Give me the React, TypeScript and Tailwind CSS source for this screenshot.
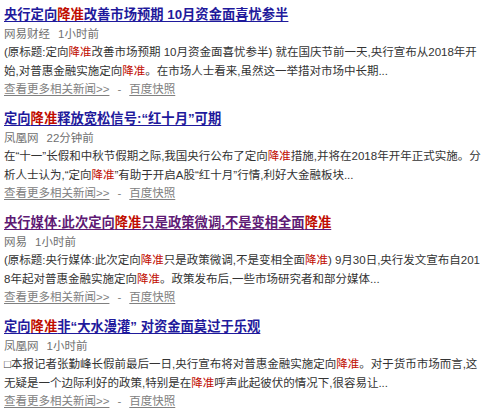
import type { ReactNode } from "react";

type Part = string | { hl: string };

interface NewsItem {
  title: Part[];
  visited?: boolean;
  source: string;
  time: string;
  lines: Part[][];
}

const HL = { hl: "降准" };

const ITEMS: NewsItem[] = [
  {
    title: ["央行定向", HL, "改善市场预期 10月资金面喜忧参半"],
    source: "网易财经",
    time: "1小时前",
    lines: [
      ["(原标题:定向", HL, "改善市场预期 10月资金面喜忧参半) 就在国庆节前一天,央行宣布从2018年开"],
      ["始,对普惠金融实施定向", HL, "。在市场人士看来,虽然这一举措对市场中长期..."],
    ],
  },
  {
    title: ["定向", HL, "释放宽松信号:“红十月”可期"],
    source: "凤凰网",
    time: "22分钟前",
    lines: [
      ["在“十一”长假和中秋节假期之际,我国央行公布了定向", HL, "措施,并将在2018年开年正式实施。分"],
      ["析人士认为,“定向", HL, "”有助于开启A股“红十月”行情,利好大金融板块..."],
    ],
  },
  {
    title: ["央行媒体:此次定向", HL, "只是政策微调,不是变相全面", HL],
    visited: true,
    source: "网易",
    time: "1小时前",
    lines: [
      ["(原标题:央行媒体:此次定向", HL, "只是政策微调,不是变相全面", HL, ") 9月30日,央行发文宣布自201"],
      ["8年起对普惠金融实施定向", HL, "。政策发布后,一些市场研究者和部分媒体..."],
    ],
  },
  {
    title: ["定向", HL, "非“大水漫灌” 对资金面莫过于乐观"],
    source: "凤凰网",
    time: "1小时前",
    lines: [
      ["□本报记者张勤峰长假前最后一日,央行宣布将对普惠金融实施定向", HL, "。对于货币市场而言,这"],
      ["无疑是一个边际利好的政策,特别是在", HL, "呼声此起彼伏的情况下,很容易让..."],
    ],
  },
];

function render(parts: Part[]): ReactNode[] {
  return parts.map((p, i) =>
    typeof p === "string" ? (
      <span key={i}>{p}</span>
    ) : (
      <span key={i} className="text-[#c00c00]">
        {p.hl}
      </span>
    ),
  );
}

function NewsBlock({ item }: { item: NewsItem }) {
  return (
    <div className="mb-[11px]">
      <div
        className={`whitespace-nowrap text-[13.3px] leading-[20px] font-bold underline underline-offset-2 ${
          item.visited ? "text-[#5e1a74]" : "text-[#1f1a9c]"
        }`}
      >
        {render(item.title)}
      </div>
      <div className="whitespace-nowrap text-[11.5px] leading-[18px] text-[#707070]">
        <span>{item.source}</span>
        <span className="ml-[8px]">{item.time}</span>
      </div>
      {item.lines.map((line, i) => (
        <div key={i} className="whitespace-nowrap text-[11.5px] leading-[19px] text-[#333333]">
          {render(line)}
        </div>
      ))}
      <div className="whitespace-nowrap text-[11.5px] leading-[17px] text-[#808080]">
        <span className="underline underline-offset-2">查看更多相关新闻&gt;&gt;</span>
        <span className="mx-[8px]">-</span>
        <span className="underline underline-offset-2">百度快照</span>
      </div>
    </div>
  );
}

export default function App() {
  return (
    <div
      className="h-[415px] w-[500px] overflow-hidden bg-white pt-[5px] pl-[4px]"
      style={{ fontFamily: '"Liberation Sans", "Noto Sans CJK SC", sans-serif' }}
    >
      {ITEMS.map((item, i) => (
        <NewsBlock key={i} item={item} />
      ))}
    </div>
  );
}
